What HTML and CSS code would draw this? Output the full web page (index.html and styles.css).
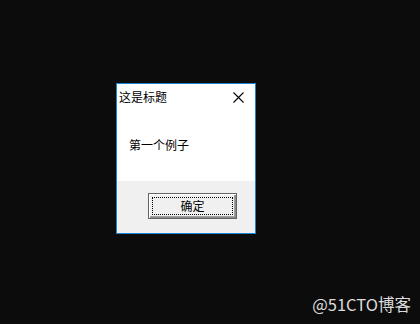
FILE: index.html
```html
<!DOCTYPE html>
<html lang="zh-CN">
<head>
  <meta charset="UTF-8">
  <meta name="viewport" content="width=device-width, initial-scale=1.0">
  <title>这是标题</title>
  <link rel="stylesheet" href="styles.css">
</head>
<body>
  <div class="desktop">
    <!-- Message Box -->
    <div class="dialog">
      <div class="titlebar">
        <span class="title">这是标题</span>
        <span class="close">
          <svg width="11" height="11" viewBox="0 0 11 11">
            <path d="M0.5 0.5 L10.5 10.5 M10.5 0.5 L0.5 10.5" stroke="#000" stroke-width="1.1" fill="none"/>
          </svg>
        </span>
      </div>
      <div class="content">第一个例子</div>
      <div class="footer">
        <button class="button"><span class="focus">确定</span></button>
      </div>
    </div>
  </div>
  <div class="watermark">@51CTO博客</div>
</body>
</html>
```

FILE: styles.css
```css
html, body {
  margin: 0;
  padding: 0;
  background-color: #0c0c0c;
  height: 100%;
  overflow: hidden;
}

body {
  font-family: "Noto Sans CJK SC", "Microsoft YaHei", sans-serif;
  font-size: 12px;
  color: #000;
}

.desktop {
  padding: 83px 0 0 116px;
}

.dialog {
  width: 138px;
  border: 1px solid #1c84d4;
  background: #fff;
  display: flex;
  flex-direction: column;
}

.titlebar {
  height: 26px;
  display: flex;
  align-items: center;
  justify-content: space-between;
  padding: 0 11px 0 2px;
}

.title {
  line-height: 14px;
}

.close {
  display: flex;
}

.content {
  height: 71px;
  padding-left: 12px;
  box-sizing: border-box;
  padding-top: 28px;
  line-height: 14px;
}

.footer {
  height: 52px;
  background: #f0f0f0;
  padding: 12px 0 0 31px;
  box-sizing: border-box;
}

.button {
  width: 89px;
  height: 26px;
  padding: 3px;
  margin: 0;
  background: #f0f0f0;
  border: 1px solid #646464;
  box-shadow: inset 1px 1px #fff, inset -1px -1px #8a8a8a, inset -2px -2px #a0a0a0;
  box-sizing: border-box;
  font-family: inherit;
  font-size: 12px;
  display: flex;
}

.focus {
  flex: 1;
  border: 1px dotted #000;
  display: flex;
  align-items: center;
  justify-content: center;
  line-height: 14px;
}

.watermark {
  position: absolute;
  right: 9px;
  bottom: 10px;
  color: #dcdcdc;
  font-size: 16.5px;
  font-family: "Noto Sans CJK SC", sans-serif;
  line-height: 19px;
}
```
